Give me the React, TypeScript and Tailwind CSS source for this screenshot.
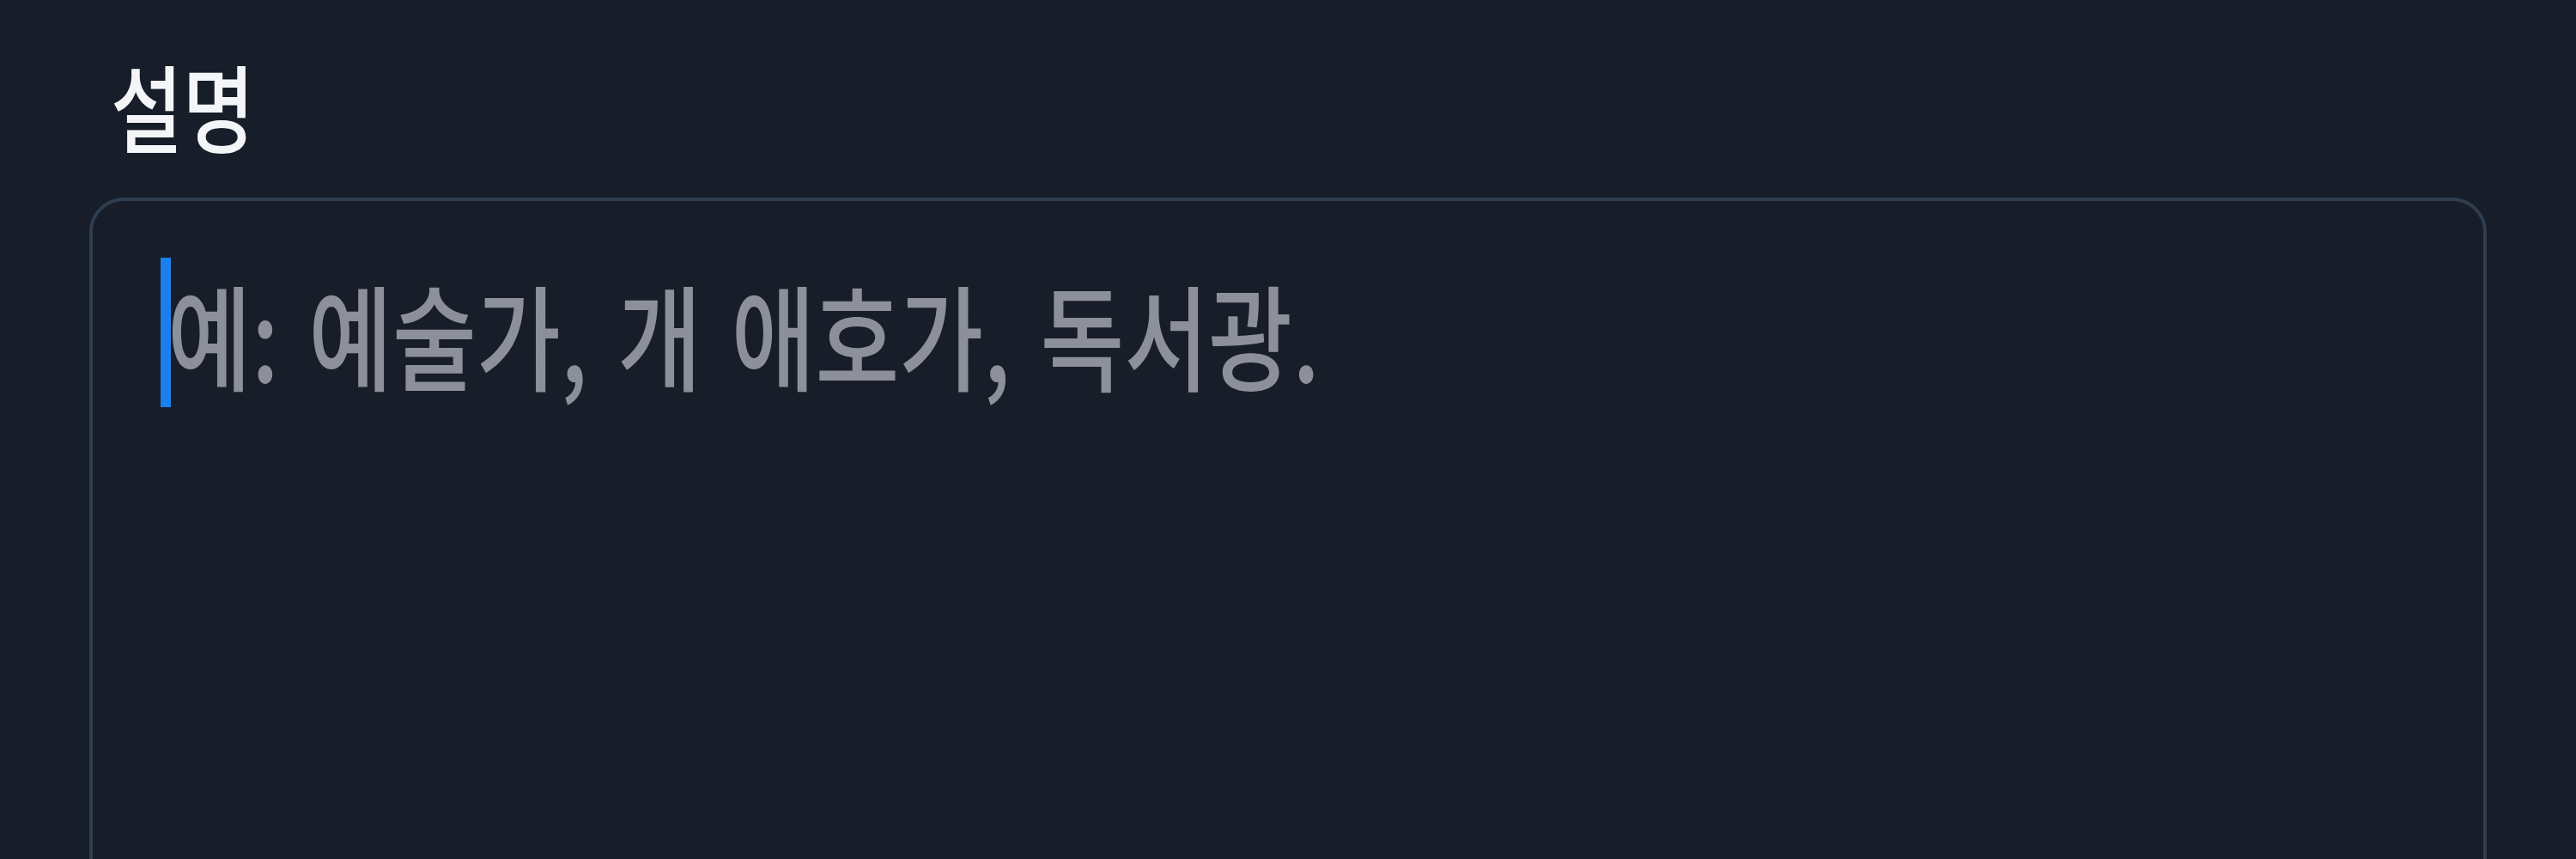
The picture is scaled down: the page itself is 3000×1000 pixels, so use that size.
export default function App() {
  return (
    <main className="min-h-screen w-full bg-[#171e29] font-['Noto_Sans_CJK_KR','Noto_Sans',sans-serif]">
      <div className="pl-[129px] pt-[66px]">
        <span className="inline-block origin-left scale-x-[0.82] text-[111px] font-medium leading-none text-[#f4f5f7] whitespace-nowrap">
          설명
        </span>
      </div>

      {/* 설명 입력칸 (포커스 상태) */}
      <div className="mx-[104px] mt-[53px] h-[900px] rounded-[40px] border-4 border-[#2f3d4f] pl-[79px] pt-[66px]">
        <div className="flex items-center">
          <span className="h-[174px] w-[12px] shrink-0 bg-[#1b80ee]" />
          <span className="-ml-[4px] inline-block origin-left scale-x-[0.8] whitespace-nowrap text-[133px] font-medium leading-none text-[#8d9099] [word-spacing:0.1em]">
            예: 예술가, 개 애호가, 독서광.
          </span>
        </div>
      </div>
    </main>
  );
}
